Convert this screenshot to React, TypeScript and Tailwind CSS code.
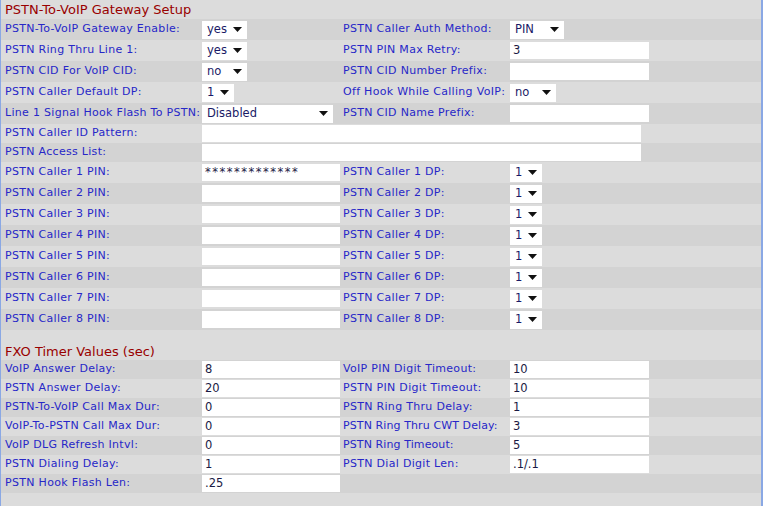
import React from "react";

type Cell =
  | { kind: "select"; value: string; w: number }
  | { kind: "input"; value: string; w?: number; stars?: boolean }
  | { kind: "none" };

type Row = {
  l: string;
  lv: Cell;
  r?: string;
  rv?: Cell;
  wide?: boolean;
  h: number;
  tight?: boolean;
};

const Arrow = () => (
  <svg width="9" height="5" viewBox="0 0 9 5" className="shrink-0">
    <path d="M0 0 L9 0 L4.5 5 Z" fill="#111" />
  </svg>
);

function Sel({ value, w }: { value: string; w: number }) {
  return (
    <div
      className="flex h-[18px] items-center justify-between bg-white pl-[5px] pr-[5px] text-[11.5px] text-[#1a1a66]"
      style={{ width: w }}
    >
      <span>{value}</span>
      <Arrow />
    </div>
  );
}

function Inp({ value, w = 138, stars }: { value: string; w?: number; stars?: boolean }) {
  return (
    <div
      className={`flex h-[17px] items-center bg-white pl-[3px] text-[11.5px] text-[#1a1a44] ${stars ? "tracking-[1.5px]" : ""}`}
      style={{ width: w }}
    >
      {value}
    </div>
  );
}

function renderCell(c: Cell | undefined) {
  if (!c || c.kind === "none") return null;
  if (c.kind === "select") return <Sel value={c.value} w={c.w} />;
  return <Inp value={c.value} w={c.w} stars={c.stars} />;
}

const sec1: Row[] = [
  { l: "PSTN-To-VoIP Gateway Enable:", lv: { kind: "select", value: "yes", w: 45 }, r: "PSTN Caller Auth Method:", rv: { kind: "select", value: "PIN", w: 54 }, h: 21 },
  { l: "PSTN Ring Thru Line 1:", lv: { kind: "select", value: "yes", w: 45 }, r: "PSTN PIN Max Retry:", rv: { kind: "input", value: "3", w: 139 }, h: 21 },
  { l: "PSTN CID For VoIP CID:", lv: { kind: "select", value: "no", w: 45 }, r: "PSTN CID Number Prefix:", rv: { kind: "input", value: "", w: 139 }, h: 21 },
  { l: "PSTN Caller Default DP:", lv: { kind: "select", value: "1", w: 32 }, r: "Off Hook While Calling VoIP:", rv: { kind: "select", value: "no", w: 46 }, h: 21 },
  { l: "Line 1 Signal Hook Flash To PSTN:", lv: { kind: "select", value: "Disabled", w: 131 }, r: "PSTN CID Name Prefix:", rv: { kind: "input", value: "", w: 139 }, h: 21 },
  { l: "PSTN Caller ID Pattern:", lv: { kind: "input", value: "", w: 439 }, wide: true, h: 19 },
  { l: "PSTN Access List:", lv: { kind: "input", value: "", w: 439 }, wide: true, h: 19 },
  ...[1, 2, 3, 4, 5, 6, 7, 8].map((n) => ({
    l: `PSTN Caller ${n} PIN:`,
    lv: { kind: "input", value: n === 1 ? "*************" : "", stars: n === 1 } as Cell,
    r: `PSTN Caller ${n} DP:`,
    rv: { kind: "select", value: "1", w: 32 } as Cell,
    h: 21,
  })),
];

const sec2: Row[] = [
  ["VoIP Answer Delay:", "8", "VoIP PIN Digit Timeout:", "10"],
  ["PSTN Answer Delay:", "20", "PSTN PIN Digit Timeout:", "10"],
  ["PSTN-To-VoIP Call Max Dur:", "0", "PSTN Ring Thru Delay:", "1"],
  ["VoIP-To-PSTN Call Max Dur:", "0", "PSTN Ring Thru CWT Delay:", "3"],
  ["VoIP DLG Refresh Intvl:", "0", "PSTN Ring Timeout:", "5"],
  ["PSTN Dialing Delay:", "1", "PSTN Dial Digit Len:", ".1/.1"],
  ["PSTN Hook Flash Len:", ".25", "", null],
].map(([l, lv, r, rv]) => ({
  l: l as string,
  lv: { kind: "input", value: lv as string } as Cell,
  r: r as string,
  rv: (rv === null ? { kind: "none" } : { kind: "input", value: rv as string, w: 139 }) as Cell,
  h: 19,
  tight: r === "PSTN Ring Thru CWT Delay:" || r === "PSTN Ring Timeout:",
}));

function DataRow({ row, dark }: { row: Row; dark: boolean }) {
  return (
    <div
      className={`flex items-center ${dark ? "bg-[#d3d3d3]" : "bg-[#dcdcdc]"}`}
      style={{ height: row.h }}
    >
      <div className="w-[201px] shrink-0 pl-[4px] text-[11px] tracking-[0.3px] text-[#2727c8] whitespace-nowrap">
        {row.l}
      </div>
      {row.wide ? (
        <div className="flex-1">{renderCell(row.lv)}</div>
      ) : (
        <>
          <div className="w-[141px] shrink-0">{renderCell(row.lv)}</div>
          <div
            className={`w-[167px] shrink-0 text-[11px] text-[#2727c8] whitespace-nowrap ${row.tight ? "tracking-[0.1px]" : "tracking-[0.3px]"}`}
          >
            {row.r}
          </div>
          <div className="flex-1">{renderCell(row.rv)}</div>
        </>
      )}
    </div>
  );
}

export default function App() {
  return (
    <div
      className="h-[506px] w-[764px] overflow-hidden bg-white"
      style={{ fontFamily: '"DejaVu Sans", Verdana, sans-serif' }}
    >
      <div className="flex h-full w-[763px] flex-col border-l border-r-2 border-[#8aa8e4] bg-[#dcdcdc]">
        <div className="flex h-[19px] items-center pl-[4px] text-[13px] text-[#990000]">
          PSTN-To-VoIP Gateway Setup
        </div>
        {sec1.map((r, i) => (
          <DataRow key={i} row={r} dark={i % 2 === 0} />
        ))}
        <div className="h-[13px] bg-[#dcdcdc]" />
        <div className="flex h-[17px] items-center pl-[4px] text-[13px] text-[#990000]">
          FXO Timer Values (sec)
        </div>
        {sec2.map((r, i) => (
          <DataRow key={i} row={r} dark={i % 2 === 0} />
        ))}
        <div className="flex-1 bg-[#dcdcdc]" />
      </div>
    </div>
  );
}
